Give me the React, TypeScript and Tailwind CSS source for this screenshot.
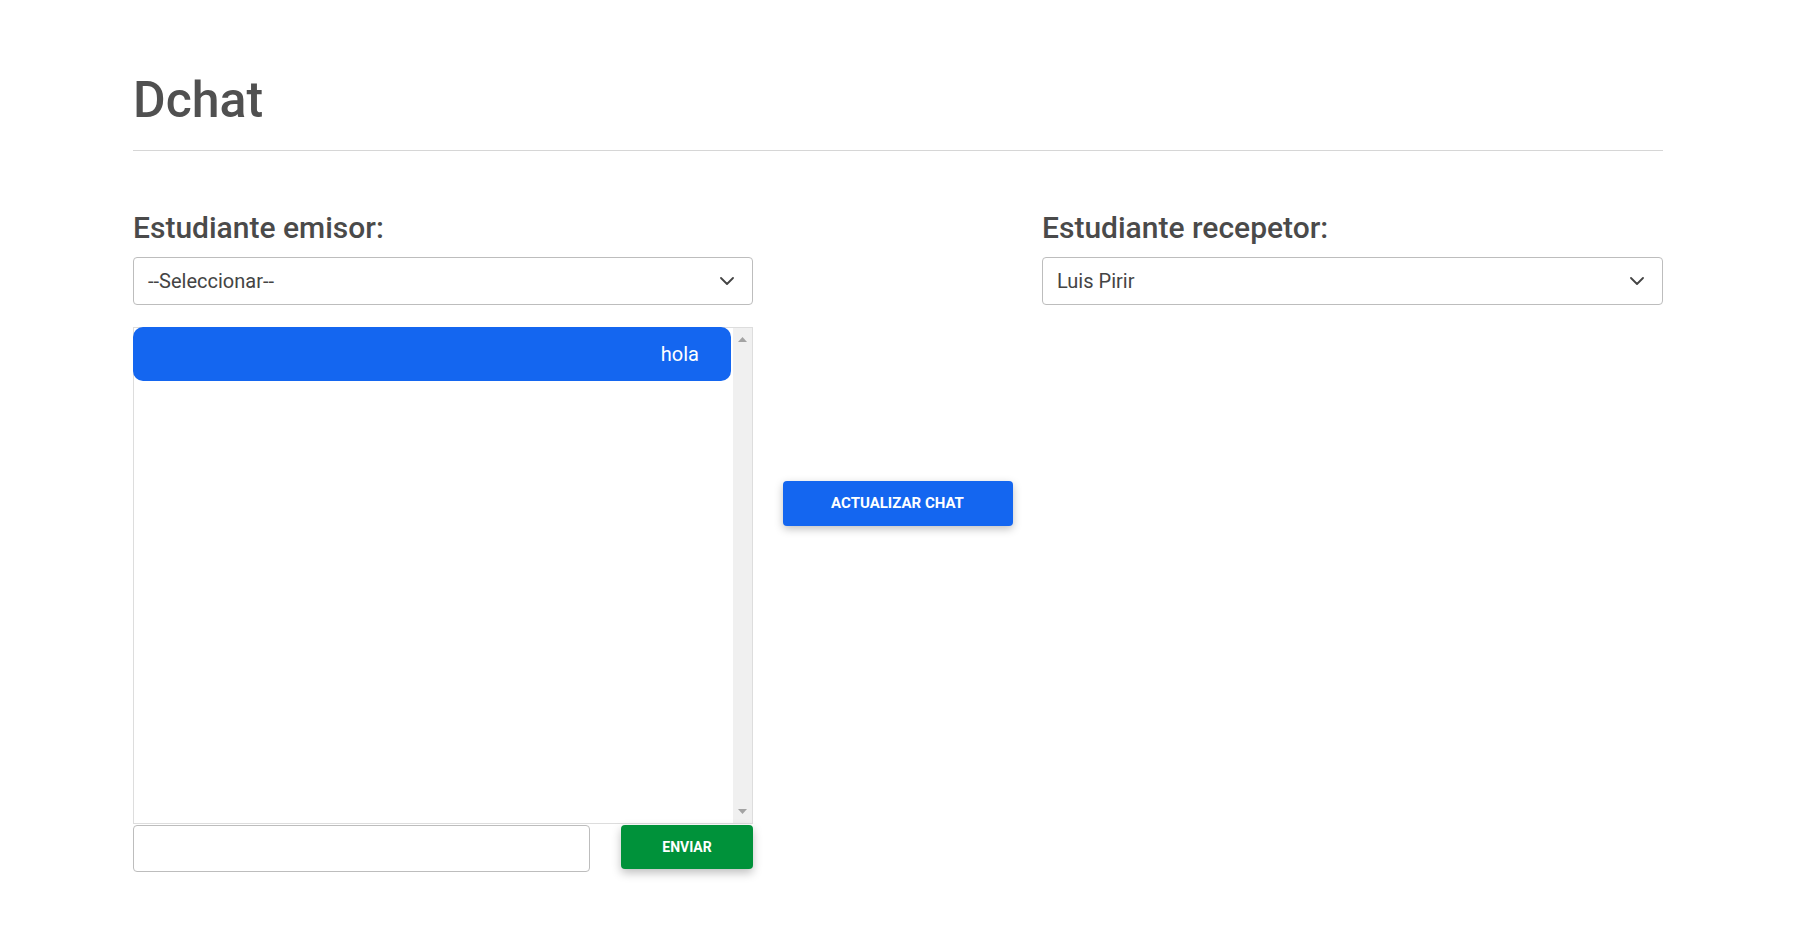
import React from "react";

function Chevron() {
  return (
    <svg width="14" height="8" viewBox="0 0 14 8" fill="none">
      <path d="M1 1l6 6 6-6" stroke="#444" strokeWidth="1.8" strokeLinecap="round" strokeLinejoin="round" />
    </svg>
  );
}

function SelectBox({ value }: { value: string }) {
  return (
    <div className="mt-[14px] h-[48px] rounded-[4px] border border-[#bdbdbd] bg-white flex items-center justify-between pl-[14px] pr-[18px]">
      <span className="text-[20px] text-[#444444]">{value}</span>
      <Chevron />
    </div>
  );
}

export default function App() {
  return (
    <div className="min-h-screen bg-white font-['Roboto',sans-serif] pl-[133px] pr-[141px] pt-[75px]">
      <h1 className="text-[50px] leading-[50px] font-medium text-[#505050]">Dchat</h1>
      <div className="mt-[25px] h-px bg-[#d6d6d6]" />
      <div className="mt-[62px] grid grid-cols-[620px_1fr_621px]">
        <div>
          <div className="text-[30px] leading-[30px] font-medium text-[#4a4a4a]">Estudiante emisor:</div>
          <SelectBox value="--Seleccionar--" />
          <div className="mt-[22px] h-[497px] border border-[#dddddd] flex">
            <div className="flex-1 pr-[2px]">
              <div className="-ml-px -mt-px h-[54px] rounded-[10px] bg-[#1466f0] flex items-center justify-end pr-[32px]">
                <span className="text-[20px] text-white">hola</span>
              </div>
            </div>
            <div className="w-[19px] bg-[#f0f0f0] flex flex-col items-center justify-between py-[9px]">
              <svg width="9" height="5" viewBox="0 0 9 5"><path d="M0 5L4.5 0 9 5z" fill="#a3a3a3" /></svg>
              <svg width="9" height="5" viewBox="0 0 9 5"><path d="M0 0L4.5 5 9 0z" fill="#a3a3a3" /></svg>
            </div>
          </div>
          <div className="mt-px flex items-start justify-between">
            <div className="w-[457px] h-[47px] rounded-[4px] border border-[#bdbdbd] bg-white" />
            <button className="w-[132px] h-[44px] rounded-[4px] bg-[#00923a] text-white text-[14px] font-bold shadow-[0_4px_10px_rgba(0,0,0,0.25)]">
              ENVIAR
            </button>
          </div>
        </div>
        <div className="pt-[268px] flex justify-center">
          <button className="w-[230px] h-[45px] rounded-[4px] bg-[#1466f0] text-white text-[15px] font-bold shadow-[0_3px_8px_rgba(0,0,0,0.25)]">
            ACTUALIZAR CHAT
          </button>
        </div>
        <div>
          <div className="text-[30px] leading-[30px] font-medium text-[#4a4a4a]">Estudiante recepetor:</div>
          <SelectBox value="Luis Pirir" />
        </div>
      </div>
    </div>
  );
}
